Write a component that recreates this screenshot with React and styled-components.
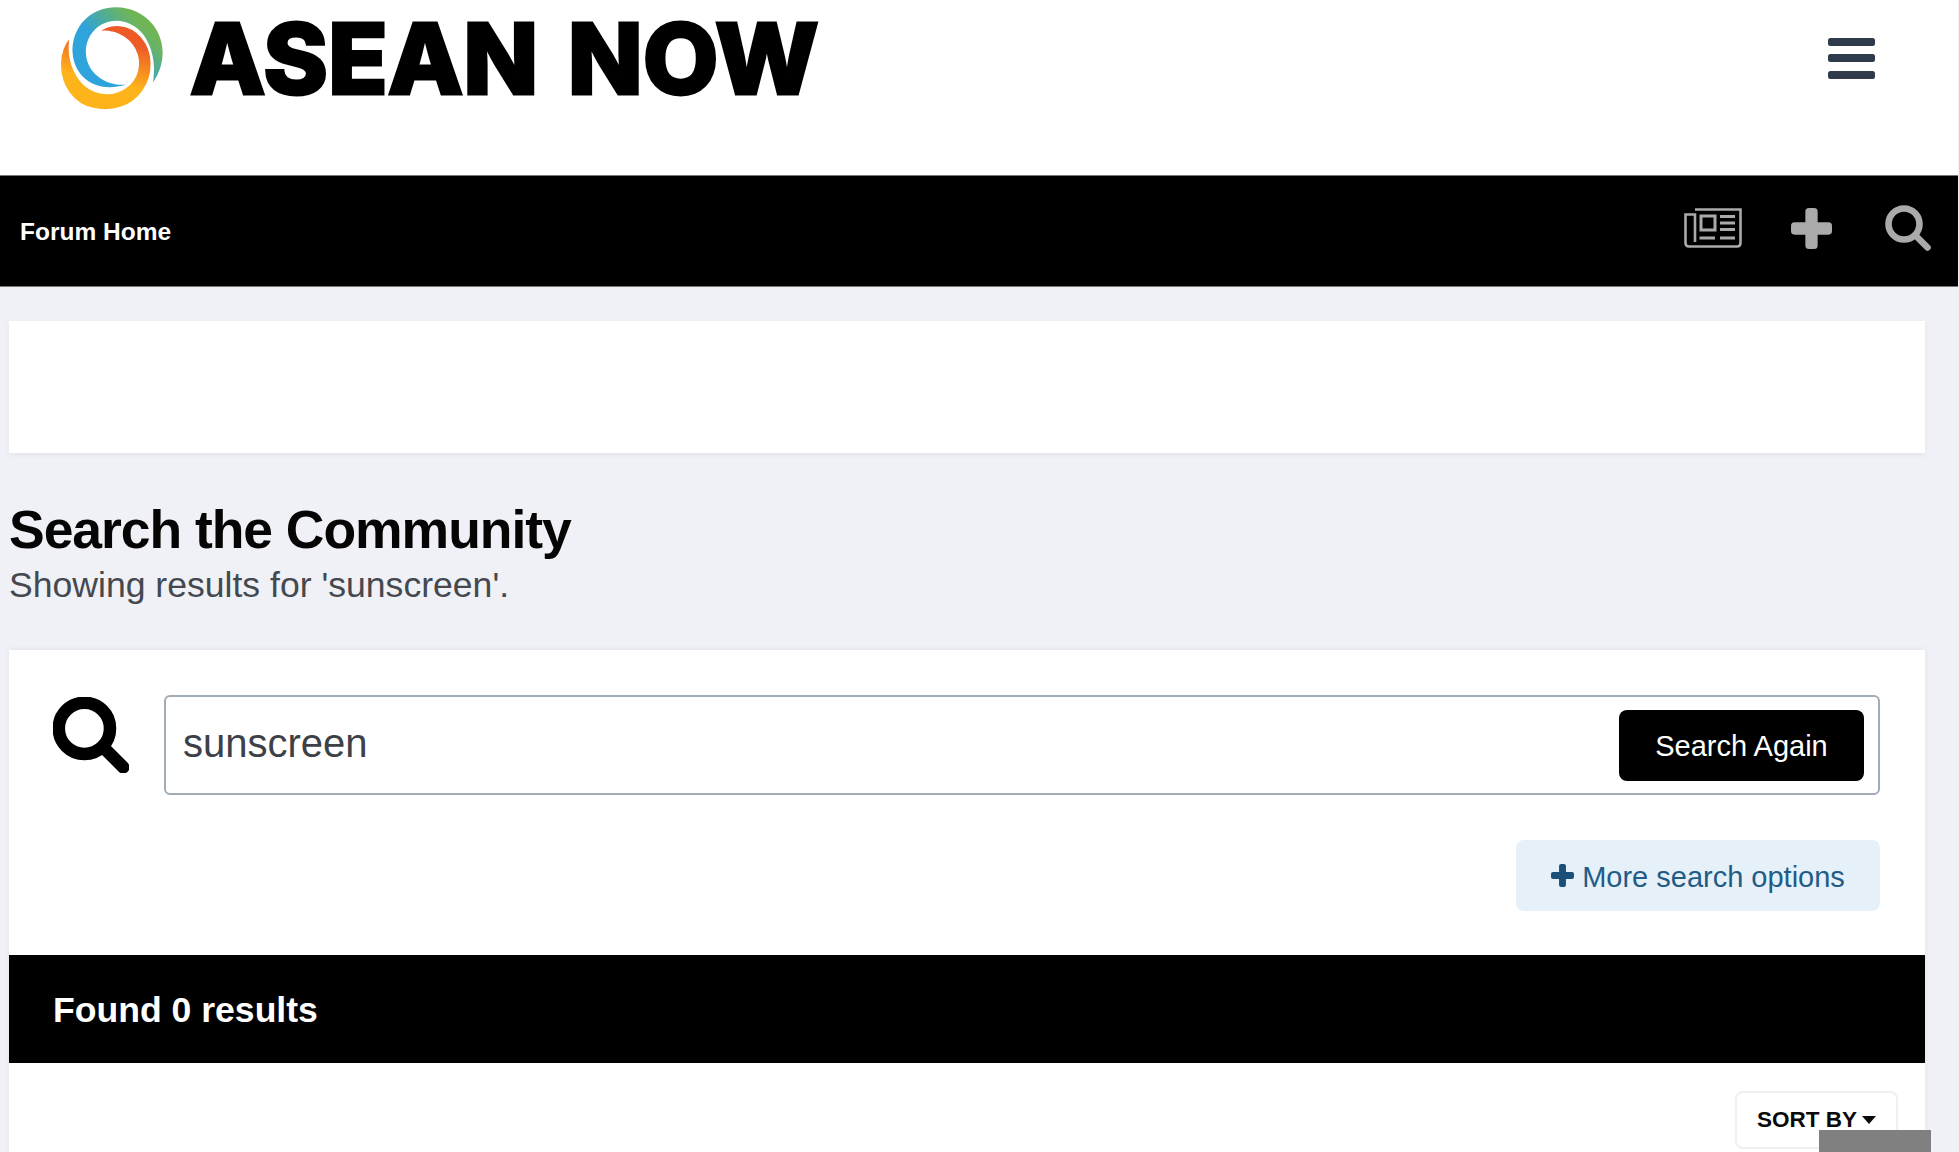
import React from "react";
import styled, { createGlobalStyle } from "styled-components";

const GlobalStyle = createGlobalStyle`
  html, body {
    margin: 0;
    height: 1152px;
    overflow: hidden;
    background: #eff1f6;
    font-family: "Liberation Sans", Arial, sans-serif;
  }
  * {
    box-sizing: border-box;
  }
`;

function LogoMark() {
  return (
    <LogoSvg viewBox="90 20 313 313">
      <defs>
        <linearGradient id="ringCool" x1="0.1" y1="0.75" x2="0.85" y2="0.1">
          <stop offset="0.35" stopColor="#2ea3dc" />
          <stop offset="0.85" stopColor="#6fb558" />
        </linearGradient>
        <linearGradient id="ringWarm" x1="0.6" y1="0.05" x2="0.4" y2="0.85">
          <stop offset="0.15" stopColor="#ee5a26" />
          <stop offset="0.75" stopColor="#fdb31a" />
        </linearGradient>
      </defs>
      <path
        fill="url(#ringCool)"
        d="M370 248 C405 200 412 130 370 75 C330 25 260 8 200 35 C150 58 125 110 128 160 C132 225 190 285 290 255 C235 262 170 225 168 160 C166 115 195 75 240 65 C290 55 340 85 360 140 C375 180 375 215 370 248 Z"
      />
      <path
        fill="url(#ringWarm)"
        stroke="#fff"
        strokeWidth="6"
        d="M205 97 C240 65 300 70 335 110 C375 155 375 225 340 275 C305 325 245 340 190 328 C130 315 90 260 90 195 C90 160 102 130 122 108 C115 150 120 200 150 240 C180 280 240 295 285 265 C325 238 335 190 315 150 C295 110 250 90 205 97 Z"
      />
    </LogoSvg>
  );
}

function BurgerIcon() {
  return (
    <svg width="47" height="41" viewBox="0 0 47 41" fill="#2f3a4d">
      <rect y="0" width="47" height="8" rx="2.5" />
      <rect y="16" width="47" height="8" rx="2.5" />
      <rect y="33" width="47" height="8" rx="2.5" />
    </svg>
  );
}

function NewsIcon() {
  return (
    <svg width="58" height="42" viewBox="0 0 58 40" fill="none" stroke="#aaa" strokeWidth="2.6">
      <path d="M11 1.5 H56.5 V35 Q56.5 38.5 53 38.5 H5 Q1.5 38.5 1.5 35 V6.5 H11 V34" />
      <rect x="17" y="8" width="14" height="14" strokeWidth="3" />
      <path d="M36 8.5 H51 M36 15 H51 M36 21.5 H51 M15.5 30 H31 M36 30 H51" strokeWidth="3.2" />
    </svg>
  );
}

function PlusIcon({ size, color }) {
  return (
    <svg width={size} height={size} viewBox="0 0 40 40" fill={color}>
      <rect x="14" y="0" width="12" height="40" rx="3.5" />
      <rect x="0" y="14" width="40" height="12" rx="3.5" />
    </svg>
  );
}

function SearchIcon({ size, color, weight = 6.6 }) {
  return (
    <svg width={size} height={size} viewBox="0 0 46 46" fill="none" stroke={color} strokeLinecap="round">
      <circle cx="19" cy="19" r="15.5" strokeWidth={weight} />
      <path d="M31 31 L42.5 42.5" strokeWidth={weight} />
    </svg>
  );
}

function App() {
  return (
    <>
      <GlobalStyle />
      <Page>
        <Header>
          <Brand>
            <LogoMark />
            <BrandName>ASEAN NOW</BrandName>
          </Brand>
          <BurgerIcon />
        </Header>
        <NavBar>
          <NavLink>Forum Home</NavLink>
          <NavIcons>
            <NewsIcon />
            <PlusIcon size={41} color="#aaa" />
            <SearchIcon size={46} color="#aaa" />
          </NavIcons>
        </NavBar>
        <Content>
          <AdBox />
          <TitleBlock>
            <Title>Search the Community</Title>
            <Subtitle>Showing results for 'sunscreen'.</Subtitle>
          </TitleBlock>
          <Panel>
            <SearchArea>
              <SearchRow>
                <SearchIcon size={76} color="#000" weight={7.6} />
                <Field>
                  <FieldInput value="sunscreen" readOnly />
                  <SearchButton>Search Again</SearchButton>
                </Field>
              </SearchRow>
              <OptionsRow>
                <OptionsButton>
                  <PlusIcon size={23} color="#1a4f7a" />
                  <span>More search options</span>
                </OptionsButton>
              </OptionsRow>
            </SearchArea>
            <ResultsBar>Found 0 results</ResultsBar>
            <SortRow>
              <SortButton>
                SORT BY
                <Caret />
              </SortButton>
            </SortRow>
          </Panel>
        </Content>
      </Page>
      <ScrollTab />
    </>
  );
}

const Page = styled.div`
  width: 1958px;
`;
const Header = styled.header`
  display: flex;
  justify-content: space-between;
  align-items: flex-start;
  height: 175px;
  background: #fff;
  padding: 6px 83px 0 60px;
  > svg {
    margin-top: 32px;
  }
`;
const Brand = styled.div`
  display: flex;
  align-items: flex-start;
  gap: 26px;
`;
const LogoSvg = styled.svg`
  width: 104px;
  height: 105px;
  overflow: visible;
`;
const BrandName = styled.div`
  font-family: Inter, sans-serif;
  font-weight: 800;
  font-size: 98px;
  line-height: 106px;
  word-spacing: 8px;
  color: #000;
  -webkit-text-stroke: 3px #000;
`;
const NavBar = styled.nav`
  display: flex;
  justify-content: space-between;
  align-items: center;
  height: 112px;
  background: #000;
  border-top: 1px solid #777;
  border-bottom: 1px solid #777;
  padding: 0 27px 0 20px;
`;
const NavLink = styled.a`
  color: #fff;
  font-size: 24.5px;
  font-weight: 700;
  padding-top: 2px;
`;
const NavIcons = styled.div`
  display: flex;
  align-items: center;
  gap: 49px;
  margin-top: -6px;
  svg:last-child {
    margin-left: 4px;
  }
`;
const Content = styled.main`
  padding: 34px 33px 0 9px;
`;
const AdBox = styled.div`
  height: 132px;
  background: #fff;
  box-shadow: 0 2px 6px rgba(0, 0, 0, 0.05);
`;
const TitleBlock = styled.div`
  padding-top: 46px;
  height: 197px;
`;
const Title = styled.h1`
  margin: 0;
  font-size: 53.5px;
  line-height: 62px;
  font-weight: 700;
  letter-spacing: -1.05px;
  color: #050505;
`;
const Subtitle = styled.p`
  margin: 2px 0 0;
  font-size: 35.6px;
  line-height: 44px;
  color: #45494f;
`;
const Panel = styled.section`
  background: #fff;
  height: 502px;
  box-shadow: 0 -1px 6px rgba(0, 0, 0, 0.06);
`;
const SearchArea = styled.div`
  padding: 45px 45px 44px 44px;
`;
const SearchRow = styled.div`
  display: flex;
  align-items: flex-start;
  gap: 35px;
  svg {
    flex: none;
    margin-top: 2px;
  }
`;
const Field = styled.div`
  flex: 1;
  display: flex;
  align-items: center;
  height: 100px;
  padding: 0 14px 0 17px;
  border: 2px solid #a2acb6;
  border-radius: 6px;
`;
const FieldInput = styled.input`
  flex: 1;
  min-width: 0;
  border: 0;
  outline: 0;
  padding: 0 0 3px;
  font-family: inherit;
  font-size: 40px;
  color: #3d4147;
  background: transparent;
`;
const SearchButton = styled.button`
  width: 245px;
  height: 71px;
  border: 0;
  border-radius: 8px;
  padding: 2px 0 0;
  background: #000;
  color: #fff;
  font-family: inherit;
  font-size: 29px;
`;
const OptionsRow = styled.div`
  display: flex;
  justify-content: flex-end;
  margin-top: 45px;
`;
const OptionsButton = styled.a`
  display: flex;
  align-items: center;
  justify-content: center;
  gap: 8px;
  width: 364px;
  height: 71px;
  border-radius: 8px;
  background: #e6f0f8;
  color: #1f5c87;
  font-size: 29px;
  span {
    padding-top: 3px;
  }
`;
const ResultsBar = styled.h2`
  display: flex;
  align-items: center;
  height: 108px;
  margin: 0;
  padding: 2px 0 0 44px;
  background: #000;
  color: #fff;
  font-size: 35.6px;
  font-weight: 700;
`;
const SortRow = styled.div`
  display: flex;
  justify-content: flex-end;
  padding: 28px 27px 0 0;
`;
const SortButton = styled.a`
  display: flex;
  align-items: center;
  justify-content: center;
  gap: 5px;
  width: 163px;
  height: 58px;
  border: 2px solid #eef0f2;
  border-radius: 8px;
  color: #0a0a0a;
  font-size: 22.5px;
  font-weight: 700;
`;
const Caret = styled.span`
  width: 0;
  height: 0;
  border-left: 7.5px solid transparent;
  border-right: 7.5px solid transparent;
  border-top: 8px solid #0a0a0a;
`;
const ScrollTab = styled.div`
  position: fixed;
  right: 28px;
  bottom: 0;
  width: 112px;
  height: 22px;
  background: #808080;
`;

export default App;
